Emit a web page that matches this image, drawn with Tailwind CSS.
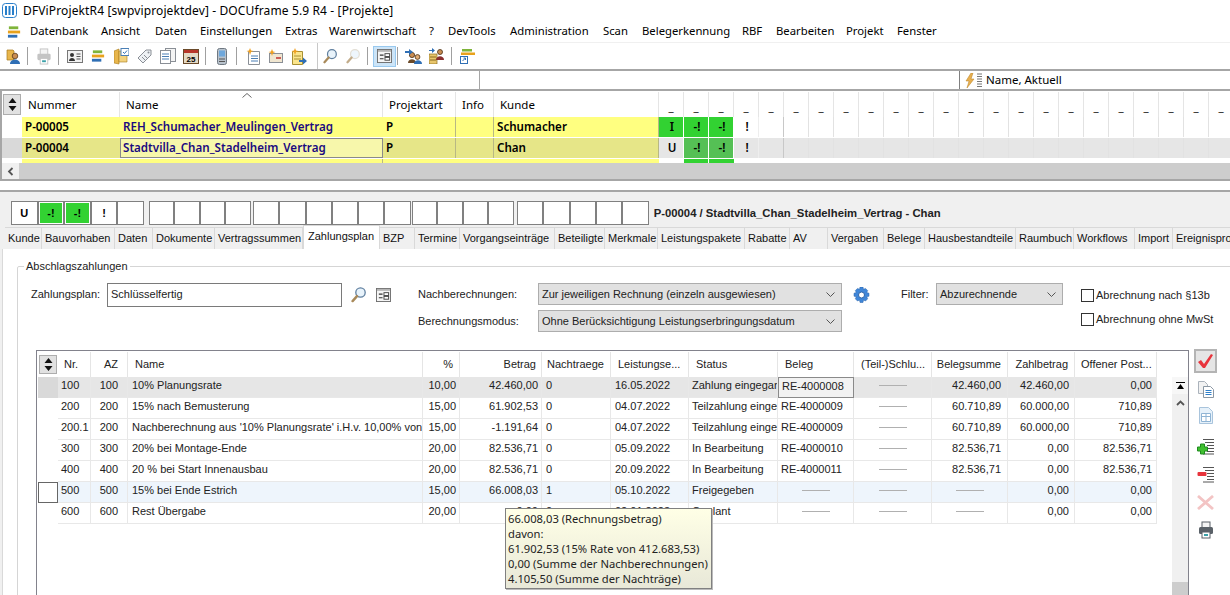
<!DOCTYPE html>
<html lang="de">
<head>
    <meta charset="UTF-8">
    <title>DOCUframe</title>
    <script src="https://cdn.jsdelivr.net/npm/@tailwindcss/browser@4"></script>
</head>
<body class="w-[1230px] h-[595px] overflow-hidden bg-white text-black font-['Liberation_Sans',sans-serif]">

    <!-- shared icons -->
    <svg class="hidden">
        <symbol id="i-printer" viewBox="0 0 16 18">
            <rect x="4" y="1" width="8" height="6" fill="#f4f4f4" stroke="currentColor"/>
            <rect x="1" y="6" width="14" height="7" rx="1.5" fill="currentColor"/>
            <rect x="4" y="11" width="8" height="6" fill="#fff" stroke="currentColor"/>
            <rect x="6" y="13" width="4" height="2" fill="#3aa0a8"/>
        </symbol>
        <symbol id="i-lens" viewBox="0 0 16 16">
            <circle cx="9.500" cy="6" r="4.700" fill="#e8f3fb" stroke="currentColor" stroke-width="1.300"/>
            <path d="M6 9.600 1.600 14.600" stroke="#a98a5a" stroke-width="2.400" stroke-linecap="round"/>
        </symbol>
        <symbol id="i-props" viewBox="0 0 16 15">
            <rect x="0.500" y="0.500" width="15" height="14" fill="#f5f5f5" stroke="#6d6d6d"/>
            <rect x="1" y="1" width="14" height="2" fill="#b5b5b5"/>
            <path d="M3 6.500h4M3 10.500h4" stroke="#333" stroke-width="1.200"/>
            <rect x="8.500" y="5" width="5" height="3" fill="#fff" stroke="#444"/>
            <rect x="8.500" y="9" width="5" height="3" fill="#fff" stroke="#444"/>
        </symbol>
        <symbol id="i-bars" viewBox="0 0 16 14">
            <rect x="2" y="1" width="10" height="3" fill="#7fb43a"/>
            <rect x="1" y="5.500" width="13" height="3" fill="#e8a21c"/>
            <rect x="1" y="10" width="10" height="3" fill="#2f6fb5"/>
        </symbol>
        <symbol id="i-people" viewBox="0 0 16 16">
            <circle cx="6" cy="7" r="2.600" fill="#c98d52" stroke="#4a2e12" stroke-width=".8"/>
            <path d="M2 15c0-5 8-5 8 0z" fill="#6b4a28"/>
            <circle cx="11.500" cy="9" r="2.400" fill="#e0ac74" stroke="#4a2e12" stroke-width=".8"/>
            <path d="M8 16c0-5 8-5 8 0z" fill="#2f6fb5"/>
        </symbol>
    </svg>

    <!-- title bar -->
    <div class="h-[21px] flex items-center pl-[2px] font-['Noto_Sans',sans-serif] text-[12px] tracking-[0.13px]">
        <svg class="w-[15px] h-[15px] mr-[6px]" viewBox="0 0 15 15"><rect x=".5" y=".5" width="14" height="14" rx="3" fill="#fff" stroke="#2a7fc9"/><path d="M4 3v9M7.500 3v9M11 3v9" stroke="#2a7fc9" stroke-width="2"/></svg>
        <span>DFViProjektR4 [swpviprojektdev] - DOCUframe 5.9 R4 - [Projekte]</span>
    </div>

    <!-- menu bar -->
    <div class="h-[21px] flex items-center font-['Noto_Sans',sans-serif] text-[11.300px] whitespace-nowrap">
        <svg class="w-[15px] h-[14px] ml-[7px] mr-[8px]"><use href="#i-bars"/></svg>
        <span class="w-[71px]">Datenbank</span>
        <span class="w-[54px]">Ansicht</span>
        <span class="w-[45px]">Daten</span>
        <span class="w-[85px]">Einstellungen</span>
        <span class="w-[44px]">Extras</span>
        <span class="w-[100px]">Warenwirtschaft</span>
        <span class="w-[19px]">?</span>
        <span class="w-[62px]">DevTools</span>
        <span class="w-[93px]">Administration</span>
        <span class="w-[39px]">Scan</span>
        <span class="w-[100px]">Belegerkennung</span>
        <span class="w-[34px]">RBF</span>
        <span class="w-[70px]">Bearbeiten</span>
        <span class="w-[51px]">Projekt</span>
        <span>Fenster</span>
    </div>

    <!-- toolbar -->
    <div class="h-[27px] border-t border-[#f0f0f0] flex items-center">
        <svg class="w-[15px] h-[16px] ml-[6px]" viewBox="0 0 15 16"><path d="M1 2h6l1 1v9H1z" fill="#e8b64c" stroke="#a67a1c" stroke-width=".7"/><circle cx="9" cy="8" r="2.800" fill="#c98d52" stroke="#4a2e12" stroke-width=".7"/><path d="M4 16c0-6 10-6 10 0z" fill="#2f6fb5"/></svg>
        <div class="w-px h-[18px] bg-[#a0a0a0] ml-[6px]"></div>
        <svg class="w-[16px] h-[17px] ml-[8px] text-[#c4c4c4]"><use href="#i-printer"/></svg>
        <div class="w-px h-[18px] bg-[#a0a0a0] ml-[6px]"></div>
        <svg class="w-[16px] h-[13px] ml-[8px]" viewBox="0 0 16 13"><rect x=".5" y=".5" width="15" height="12" fill="#f2f2f2" stroke="#777"/><circle cx="5" cy="5" r="2" fill="#333"/><path d="M2 11c0-4 6-4 6 0z" fill="#333"/><path d="M9.500 4h4M9.500 6.500h4M9.500 9h4" stroke="#555"/></svg>
        <svg class="w-[15px] h-[14px] ml-[8px]"><use href="#i-bars"/></svg>
        <svg class="w-[15px] h-[17px] ml-[8px]" viewBox="0 0 15 17"><path d="M0 3 5 1v15l-5-1z" fill="#e8b64c" stroke="#a67a1c" stroke-width=".6"/><path d="M5 3h8v11H5z" fill="#f3d27c" stroke="#a67a1c" stroke-width=".6"/><rect x="7" y="0.500" width="8" height="7" fill="#fff" stroke="#4a7fb5"/><path d="m9 4 1.500 1.500L13 2.500" fill="none" stroke="#2f6fb5"/></svg>
        <svg class="w-[15px] h-[15px] ml-[8px]" viewBox="0 0 15 15"><path d="M9 1h5v5l-8 8-5-5z" fill="#eef1f4" stroke="#8a8f96"/><circle cx="11.500" cy="3.500" r="1" fill="#8a8f96"/><path d="m5 8 3 3M7 6l3 3" stroke="#8a8f96"/></svg>
        <svg class="w-[16px] h-[16px] ml-[8px]" viewBox="0 0 16 16"><rect x="5.500" y=".5" width="10" height="13" fill="#f4f4f4" stroke="#8a8f96"/><rect x=".5" y="2.500" width="10" height="13" fill="#fff" stroke="#8a8f96"/><path d="M2 6h7M2 8.500h7M2 11h7" stroke="#4a7fb5"/></svg>
        <svg class="w-[16px] h-[16px] ml-[7px]" viewBox="0 0 16 16"><rect x=".5" y="1.500" width="15" height="14" fill="#e4d9c4" stroke="#6a4a2a"/><rect x="1" y="2" width="14" height="3" fill="#b8362a"/><text x="8" y="13.500" text-anchor="middle" font-size="8" font-weight="700" font-family="Liberation Sans">25</text></svg>
        <div class="w-px h-[18px] bg-[#a0a0a0] ml-[6px]"></div>
        <svg class="w-[10px] h-[17px] ml-[11px]" viewBox="0 0 10 17"><rect x=".5" y=".5" width="9" height="16" rx="2" fill="#b8c2cc" stroke="#6f7882"/><rect x="2" y="2.500" width="6" height="6" fill="#6fa8dc"/><path d="M2 11h6M2 13.500h6" stroke="#555"/></svg>
        <div class="w-px h-[18px] bg-[#a0a0a0] ml-[9px]"></div>
        <svg class="w-[14px] h-[17px] ml-[9px]" viewBox="0 0 14 17"><path d="M2.500 3.500h11v13h-11z" fill="#fff" stroke="#8a8f96"/><path d="M5 8h7M5 10.500h7M5 13h7" stroke="#4a7fb5"/><path d="m4 0 1 2.500L7.500 3 5 4 4 7 3 4 .5 3 3 2.500z" fill="#f0a020"/></svg>
        <svg class="w-[15px] h-[14px] ml-[8px]" viewBox="0 0 15 14"><rect x="1.500" y="4.500" width="13" height="9" fill="#f0e6d0" stroke="#8a8f96"/><path d="M8 9h5" stroke="#c03030" stroke-width="1.500"/><path d="m4 0 1 2.500L7.500 3 5 4 4 7 3 4 .5 3 3 2.500z" fill="#f0a020"/></svg>
        <svg class="w-[16px] h-[17px] ml-[8px]" viewBox="0 0 16 17"><path d="M1.500 3.500h10v13h-10z" fill="#fbe58c" stroke="#a89034"/><path d="M3 8h7M3 11h7" stroke="#a89034"/><path d="m4 0 1 2.500L7.500 3 5 4 4 7 3 4 .5 3 3 2.500z" fill="#f0a020"/><path d="M8 12h4V9.500l4 3.500-4 3.500V14H8z" fill="#2f6fb5"/></svg>
        <div class="w-px h-[26px] bg-[#c8c8c8] ml-[10px]"></div>
        <svg class="w-[15px] h-[16px] ml-[5px] text-[#5f7f9f]"><use href="#i-lens"/></svg>
        <svg class="w-[15px] h-[16px] ml-[8px] text-[#d8d2c4] opacity-70"><use href="#i-lens"/></svg>
        <div class="w-px h-[18px] bg-[#a0a0a0] ml-[6px]"></div>
        <div class="w-[23px] h-[21px] ml-[5px] bg-[#cce4f7] border border-[#99c9ef] flex items-center justify-center">
            <svg class="w-[15px] h-[14px]"><use href="#i-props"/></svg>
        </div>
        <div class="w-px h-[18px] bg-[#a0a0a0] ml-[1px]"></div>
        <svg class="w-[17px] h-[16px] ml-[7px]" viewBox="0 0 17 16"><use href="#i-people" x="1" y="0" width="16" height="16"/><path d="M0 3h4V1l4 3-4 3V5H0z" fill="#2f6fb5"/></svg>
        <svg class="w-[16px] h-[16px] ml-[7px]" viewBox="0 0 16 16"><path d="M0 6h8v10H0z" fill="#e8c66c" stroke="#8a6a20" stroke-width=".7"/><path d="M1 9h6M1 12h6" stroke="#8a6a20"/><path d="M0 2h3V0l3 2.500L3 5V3H0z" fill="#2f6fb5"/><circle cx="11" cy="4" r="2.500" fill="#c98d52" stroke="#4a2e12" stroke-width=".8"/><path d="M7 12c0-5 8-5 8 0z" fill="#8a2f2f"/></svg>
        <div class="w-px h-[18px] bg-[#a0a0a0] ml-[6px]"></div>
        <svg class="w-[16px] h-[16px] ml-[8px]" viewBox="0 0 16 16"><rect x="2" y="1" width="10" height="2.500" fill="#7fb43a"/><rect x="1" y="4.500" width="14" height="2.500" fill="#e8a21c"/><rect x=".5" y="8.500" width="7" height="7" fill="#fff" stroke="#2f6fb5"/><path d="m2.500 13 3-3M3.500 10h2v2" stroke="#2f6fb5" fill="none"/></svg>
    </div>

    <!-- filter bar -->
    <div class="h-[22px] border-t-2 border-b-2 border-[#a6a6a6] flex text-[11.500px] font-['Noto_Sans',sans-serif]">
        <div class="w-[480px] border-r border-[#a6a6a6]"></div>
        <div class="w-[480px] border-r border-[#808080]"></div>
        <div class="flex items-center pl-[5px]">
            <svg class="w-[10px] h-[15px] mr-[2px]" viewBox="0 0 10 15"><path d="M6 0 1 8h3L2 15l7-9H6l2-6z" fill="#e8b050" stroke="#b98020" stroke-width=".5"/></svg>
            <svg class="w-[5px] h-[15px] mr-[4px]" viewBox="0 0 5 15"><path d="M0 1h5M0 3.500h5M0 6h5M0 8.500h5M0 11h5M0 13.500h5" stroke="#777"/></svg>
            <span>Name, Aktuell</span>
        </div>
    </div>

    <!-- project grid -->
    <div class="h-[90px] pt-px border-l-2 border-b-2 border-[#a6a6a6] overflow-hidden">
        <div id="topGrid"></div>
        <div class="h-[17px] flex bg-[#cdcdcd]">
            <div class="w-[17px] bg-[#f0f0f0] flex items-center justify-center">
                <svg class="w-[7px] h-[9px]" viewBox="0 0 7 9"><path d="M5.500 1 2 4.500 5.500 8" fill="none" stroke="#555" stroke-width="1.800"/></svg>
            </div>
        </div>
    </div>

    <!-- detail panel -->
    <div class="mt-[9px] h-[405px] border-t-2 border-[#a6a6a6] bg-[#f0f0f0] overflow-hidden">
        <div class="h-[9px]"></div>
        <div class="h-[24px] flex items-center pl-[11px]">
            <div id="statusBoxes" class="flex"></div>
            <span class="ml-[5px] text-[11.300px] font-bold text-[#222] whitespace-nowrap">P-00004 / Stadtvilla_Chan_Stadelheim_Vertrag - Chan</span>
        </div>

        <!-- tabs -->
        <div id="tabs" class="h-[24px] pl-[5px] flex items-end text-[11px] text-[#111] whitespace-nowrap overflow-hidden"></div>

        <div class="ml-[2px] h-[346px] bg-white border-l border-[#d9d9d9] pt-[11px] pl-[14px] overflow-hidden">
            <fieldset class="w-[1400px] h-[340px] border border-[#d5d5d5] rounded-[2px]">
                <legend class="ml-[6px] px-[2px] text-[11px] leading-[12px] text-[#222]">Abschlagszahlungen</legend>

                <!-- form -->
                <div class="flex items-start mt-[11px] ml-[13px] text-[11px] text-[#222]">
                    <label class="w-[76px] h-[24px] leading-[22px]">Zahlungsplan:</label>
                    <div class="w-[235px] h-[24px] border border-[#7a7a7a] bg-white pl-[3px] leading-[20px]">Schlüsselfertig</div>
                    <svg class="w-[16px] h-[17px] ml-[9px] mt-[3px] text-[#5f7f9f]"><use href="#i-lens"/></svg>
                    <svg class="w-[15px] h-[14px] ml-[9px] mt-[5px]"><use href="#i-props"/></svg>

                    <div class="ml-[27px] w-[120px]">
                        <div class="h-[27px] leading-[22px]">Nachberechnungen:</div>
                        <div class="h-[22px] leading-[22px]">Berechnungsmodus:</div>
                    </div>
                    <div>
                        <div class="w-[304px] h-[22px] mb-[5px] bg-[#e1e1e1] border border-[#adadad] flex items-center justify-between pl-[3px] pr-[6px]">
                            <span>Zur jeweiligen Rechnung (einzeln ausgewiesen)</span>
                            <svg class="w-[9px] h-[5px]" viewBox="0 0 9 5"><path d="m.5.5 4 4 4-4" fill="none" stroke="#555"/></svg>
                        </div>
                        <div class="w-[304px] h-[22px] bg-[#e1e1e1] border border-[#adadad] flex items-center justify-between pl-[3px] pr-[6px]">
                            <span>Ohne Berücksichtigung Leistungserbringungsdatum</span>
                            <svg class="w-[9px] h-[5px]" viewBox="0 0 9 5"><path d="m.5.5 4 4 4-4" fill="none" stroke="#555"/></svg>
                        </div>
                    </div>
                    <svg class="w-[17px] h-[17px] ml-[11px] mt-[4px]" viewBox="0 0 17 17"><path d="M7 0h3l.5 2.300 2-.9 2.200 2.200-1 2 2.300.6v3l-2.300.6 1 2-2.200 2.200-2-1-.5 2.500H7l-.5-2.500-2 1-2.200-2.200 1-2L1 9.200v-3l2.300-.6-1-2 2.200-2.200 2 .9z" fill="#3f86d8" stroke="#2a62a8" stroke-width=".5"/><circle cx="8.500" cy="8" r="3" fill="#fff" stroke="#2a62a8"/></svg>
                    <span class="ml-[31px] w-[35px] h-[22px] leading-[22px]">Filter:</span>
                    <div class="w-[127px] h-[22px] bg-[#e1e1e1] border border-[#adadad] flex items-center justify-between pl-[3px] pr-[6px]">
                        <span>Abzurechnende</span>
                        <svg class="w-[9px] h-[5px]" viewBox="0 0 9 5"><path d="m.5.5 4 4 4-4" fill="none" stroke="#555"/></svg>
                    </div>
                    <div class="ml-[18px] pt-[6px]">
                        <div class="flex items-center h-[13px] mb-[11px]">
                            <div class="w-[13px] h-[13px] bg-white border border-[#333] mr-[2px]"></div>
                            <span class="whitespace-nowrap">Abrechnung nach §13b</span>
                        </div>
                        <div class="flex items-center h-[13px]">
                            <div class="w-[13px] h-[13px] bg-white border border-[#333] mr-[2px]"></div>
                            <span class="whitespace-nowrap">Abrechnung ohne MwSt</span>
                        </div>
                    </div>
                </div>

                <!-- payment table and its buttons -->
                <div class="flex mt-[18px] ml-[18px]">
                    <div class="w-[1153px] h-[260px] border-t border-l border-r border-[#82828c] flex pt-[1px] pl-px">
                        <div id="payGrid" class="w-[1119px] text-[11px] text-[#222]"></div>
                        <div class="ml-[15px] w-[16px] mt-[25px] h-[234px] bg-[#f0f0f0] flex flex-col">
                            <div class="h-[17px] bg-[#f7f7f7] flex items-center justify-center">
                                <svg class="w-[9px] h-[8px]" viewBox="0 0 9 8"><path d="M0 .5h9" stroke="#000"/><path d="M1 7h7L4.500 2z" fill="#000"/></svg>
                            </div>
                            <div class="h-[17px] flex items-center justify-center">
                                <svg class="w-[9px] h-[6px]" viewBox="0 0 9 6"><path d="m1 5 3.500-3.500L8 5" fill="none" stroke="#555" stroke-width="1.800"/></svg>
                            </div>
                            <div class="mt-auto h-[29px] bg-[#cdcdcd]"></div>
                        </div>
                    </div>
                    <div class="ml-[5px] w-[23px] flex flex-col items-center relative -top-[1px]">
                        <div class="w-[23px] h-[24px] bg-[#e5e5e5] border-2 border-[#b4b4b4] flex items-center justify-center">
                            <svg class="w-[17px] h-[16px]" viewBox="0 0 17 16"><path d="m1 9 3-2 3 4 7-10 2 1-8 13H6z" fill="#e8343c"/></svg>
                        </div>
                        <svg class="w-[16px] h-[17px] mt-[8px]" viewBox="0 0 16 17"><path d="M.5.5h6l3 3v9h-9z" fill="#f2f2f2" stroke="#aab2bb"/><path d="M5.500 5.500h7l3 3v8h-10z" fill="#fff" stroke="#8b97a3"/><path d="M7.500 9.500h6M7.500 11.500h6M7.500 13.500h6" stroke="#2f7fc9"/></svg>
                        <svg class="w-[14px] h-[17px] mt-[9px]" viewBox="0 0 14 17"><path d="M.5.5h9l4 4v12H.5z" fill="#e6f1fa" stroke="#a9c4dc"/><path d="M2.500 6.500h9v8h-9zM7 6.500v8M2.500 9.500h9" fill="#fff" stroke="#8fb4d4"/></svg>
                        <svg class="w-[17px] h-[17px] mt-[14px]" viewBox="0 0 17 17"><path d="M6 1.500h11M8 4.500h9M10 7.500h7M10 10.500h7M10 13.500h7M6 16h11" stroke="#555"/><path d="M3.500 6h4v3h3v4h-3v3h-4v-3H.5V9h3z" fill="#3fbf2f" stroke="#1f8a1f"/></svg>
                        <svg class="w-[17px] h-[17px] mt-[11px]" viewBox="0 0 17 17"><path d="M6 1.500h11M8 4.500h9M10 7.500h7M10 10.500h7M10 13.500h7M6 16h11" stroke="#555"/><rect x="0.500" y="6" width="9" height="4" rx="1" fill="#e8343c"/></svg>
                        <svg class="w-[17px] h-[15px] mt-[12px]" viewBox="0 0 17 15"><path d="m1 1 15 13M16 1 1 14" stroke="#f3c4c4" stroke-width="2.800"/></svg>
                        <svg class="w-[16px] h-[18px] mt-[11px] text-[#5a6168]"><use href="#i-printer"/></svg>
                    </div>
                </div>
            </fieldset>
        </div>
    </div>

    <!-- tooltip over the table -->
    <div class="absolute left-[505px] top-[508px] w-[207px] h-[81px] border border-[#808080] bg-gradient-to-b from-[#ffffe6] to-[#e8e8d8] pl-[2px] font-['Noto_Sans',sans-serif] text-[11.200px] leading-[15px] pt-[2px] text-[#222] whitespace-nowrap shadow-[1px_1px_0_#bbb]">
        <div>66.008,03 (Rechnungsbetrag)</div>
        <div>davon:</div>
        <div>61.902,53 (15% Rate von 412.683,53)</div>
        <div>0,00 (Summe der Nachberechnungen)</div>
        <div>4.105,50 (Summe der Nachträge)</div>
    </div>

    <script>
        // Top grid: project list with the status columns
        const topCols = 'grid grid-cols-[20px_98px_263px_73px_38px_165px_repeat(23,25px)]';
        const statusCount = 23;
        const headCell = 'h-[25px] border-r border-[#e5e5e5] flex items-center pl-[6px]';
        let topHtml = `<div class="${topCols} h-[25px] text-[11.500px] font-['Noto_Sans',sans-serif] whitespace-nowrap">
            <div class="h-[25px] flex items-center pl-[1px]"><div class="w-[18px] h-[21px] bg-[#e1e1e1] border border-[#adadad] flex items-center justify-center">
                <svg class="w-[9px] h-[13px]" viewBox="0 0 9 13"><path d="M4.500 0 8.500 5h-8zM4.500 13 .5 8h8z" fill="#111"/></svg></div></div>
            <div class="${headCell}">Nummer</div>
            <div class="${headCell} relative">Name<svg class="absolute left-[122px] top-[1px] w-[10px] h-[5px]" viewBox="0 0 10 5"><path d="m.5 4.500 4.500-4 4.500 4" fill="none" stroke="#666"/></svg></div>
            <div class="${headCell}">Projektart</div>
            <div class="${headCell}">Info</div>
            <div class="${headCell} pl-[3px] border-[#cfcfcf]">Kunde</div>`;
        for (let i = 0; i < statusCount; i++) {
            topHtml += `<div class="h-[25px] border-r border-[#e5e5e5] text-center leading-[29px]">_</div>`;
        }
        topHtml += '</div>';

        const projects = [
            { nr: 'P-00005', name: 'REH_Schumacher_Meulingen_Vertrag', kunde: 'Schumacher', first: 'I', rowBg: 'bg-[#ffff80]', sel: 'bg-white', rest: 'bg-white', green: 'bg-[#32d232]', firstBg: 'bg-[#32d232]', current: false },
            { nr: 'P-00004', name: 'Stadtvilla_Chan_Stadelheim_Vertrag', kunde: 'Chan', first: 'U', rowBg: 'bg-[#e6e688]', sel: 'bg-[#d9d9d9]', rest: 'bg-[#e6e6e6]', green: 'bg-[#55c055]', firstBg: 'bg-[#e6e6e6]', current: true }
        ];
        projects.forEach(p => {
            const base = `h-[20px] ${p.rowBg} border-r border-[#b8b884] flex items-center`;
            topHtml += `<div class="${topCols} h-[21px] pb-px text-[11.600px] font-['Noto_Sans',sans-serif] font-semibold whitespace-nowrap">
                <div class="h-[20px] ${p.sel}"></div>
                <div class="h-[20px] ${p.rowBg} flex items-center pl-[3px]">${p.nr}</div>
                <div class="${p.current ? 'h-[20px] bg-[#f7f7ab] border border-[#8a8a8a] flex items-center pl-[2px] text-[#1a0a80]' : 'h-[20px] ' + p.rowBg + ' flex items-center pl-[3px] text-[#1a0a80]'}">${p.name}</div>
                <div class="${base} pl-[3px]">P</div>
                <div class="${base}"></div>
                <div class="${base} pl-[3px] border-[#8a8a50]">${p.kunde}</div>
                <div class="h-[20px] ${p.firstBg} pl-[2px] text-center border-r border-white leading-[20px]">${p.first}</div>
                <div class="h-[20px] ${p.green} pl-[2px] text-center border-r border-white leading-[20px]">-!</div>
                <div class="h-[20px] ${p.green} pl-[2px] text-center border-r border-white leading-[20px]">-!</div>
                <div class="h-[20px] ${p.rest} pl-[2px] text-center border-r border-[#eeeeee] leading-[20px]">!</div>`;
            for (let i = 4; i < statusCount; i++) {
                topHtml += `<div class="h-[20px] ${p.rest} border-r ${i === 4 ? 'border-[#c8c8c8]' : 'border-[#e2e2e2]'}"></div>`;
            }
            topHtml += '</div>';
        });

        // Third row is cut off by the scrollbar
        topHtml += `<div class="${topCols} h-[4px]">
            <div></div><div class="bg-[#ffff80]"></div><div class="bg-[#ffff80] border-r border-[#b8b884]"></div><div class="bg-[#ffff80]"></div><div class="bg-[#ffff80]"></div><div class="bg-[#ffff80]"></div>
            <div></div><div class="bg-[#32d232] border-r border-white"></div><div class="bg-[#32d232]"></div></div>`;
        document.getElementById('topGrid').innerHTML = topHtml;

        // Status boxes above the tabs
        const boxGroups = [
            [['U', 'bg-white'], ['-!', 'bg-[#32d232] shadow-[inset_0_0_0_1px_white]'], ['-!', 'bg-[#32d232] shadow-[inset_0_0_0_1px_white]'], ['!', 'bg-white'], ['', 'bg-white']],
            [['', 'bg-white'], ['', 'bg-white'], ['', 'bg-white'], ['', 'bg-white']],
            [['', 'bg-white'], ['', 'bg-white'], ['', 'bg-white'], ['', 'bg-white'], ['', 'bg-white'], ['', 'bg-white']],
            [['', 'bg-white'], ['', 'bg-white'], ['', 'bg-white'], ['', 'bg-white']],
            [['', 'bg-white'], ['', 'bg-white'], ['', 'bg-white'], ['', 'bg-white'], ['', 'bg-white']]
        ];
        const boxWidths = ['w-[26.600px]', 'w-[25.500px]', 'w-[26.300px]', 'w-[25.500px]', 'w-[26.400px]'];
        const groupGaps = ['mr-[5px]', 'mr-[2px]', 'mr-[1px]', 'mr-[3px]', 'mr-0'];
        document.getElementById('statusBoxes').innerHTML = boxGroups.map((group, g) =>
            `<div class="flex ${groupGaps[g]}">` + group.map(([text, bg]) =>
                `<div class="${boxWidths[g]} h-[24px] ${bg} border border-[#808080] text-center text-[11px] font-bold leading-[22px]">${text}</div>`
            ).join('') + '</div>'
        ).join('');

        // Tabs with their measured widths
        const tabs = [
            ['Kunde', 'w-[37px]'], ['Bauvorhaben', 'w-[73px]'], ['Daten', 'w-[38px]'], ['Dokumente', 'w-[62px]'], ['Vertragssummen', 'w-[88px]'],
            ['Zahlungsplan', 'w-[77px]', true], ['BZP', 'w-[35px]'], ['Termine', 'w-[45px]'], ['Vorgangseinträge', 'w-[95px]'], ['Beteiligte', 'w-[50px]'],
            ['Merkmale', 'w-[53px]'], ['Leistungspakete', 'w-[87px]'], ['Rabatte', 'w-[45px]'], ['AV', 'w-[38px]'], ['Vergaben', 'w-[56px]'],
            ['Belege', 'w-[41px]'], ['Hausbestandteile', 'w-[91px]'], ['Raumbuch', 'w-[58px]'], ['Workflows', 'w-[61px]'], ['Import', 'w-[38px]'], ['Ereignisprotokoll', 'w-[100px]']
        ];
        document.getElementById('tabs').innerHTML = tabs.map(([label, width, active]) => active
            ? `<div class="${width} h-[24px] shrink-0 bg-white border border-b-0 border-[#d9d9d9] pl-[4px] leading-[20px]">${label}</div>`
            : `<div class="${width} h-[22px] shrink-0 border-r border-[#d9d9d9] border-t pl-[3px] leading-[20px] overflow-hidden">${label}</div>`
        ).join('');

        // Payment table
        const payCols = 'grid grid-cols-[20px_33px_37px_295px_37px_82px_69px_78px_89px_76px_78px_76px_67px_82px]';
        const dash = '<div class="h-px w-[28px] bg-[#b0b0b0]"></div>';
        const head = [['Nr.', 'pl-[6px]'], ['AZ', 'justify-end pr-[9px]'], ['Name', 'pl-[7px]'], ['%', 'justify-end pr-[6px]'], ['Betrag', 'justify-end pr-[5px]'], ['Nachtraege', 'pl-[5px]'], ['Leistungse...', 'pl-[7px]'], ['Status', 'pl-[7px]'], ['Beleg', 'pl-[7px]'], ['(Teil-)Schlu...', 'pl-[7px]'], ['Belegsumme', 'justify-end pr-[6px]'], ['Zahlbetrag', 'justify-end pr-[6px]'], ['Offener Post...', 'pl-[6px]']];
        const rows = [
            ['100', '100', '10% Planungsrate', '10,00', '42.460,00', '0', '16.05.2022', 'Zahlung eingegangen', 'RE-4000008', '', '42.460,00', '42.460,00', '0,00'],
            ['200', '200', '15% nach Bemusterung', '15,00', '61.902,53', '0', '04.07.2022', 'Teilzahlung eingegangen', 'RE-4000009', '', '60.710,89', '60.000,00', '710,89'],
            ['200.1', '200', "Nachberechnung aus '10% Planungsrate' i.H.v. 10,00% von", '15,00', '-1.191,64', '0', '04.07.2022', 'Teilzahlung eingegangen', 'RE-4000009', '', '60.710,89', '60.000,00', '710,89'],
            ['300', '300', '20% bei Montage-Ende', '20,00', '82.536,71', '0', '05.09.2022', 'In Bearbeitung', 'RE-4000010', '', '82.536,71', '0,00', '82.536,71'],
            ['400', '400', '20 % bei Start Innenausbau', '20,00', '82.536,71', '0', '20.09.2022', 'In Bearbeitung', 'RE-4000011', '', '82.536,71', '0,00', '82.536,71'],
            ['500', '500', '15% bei Ende Estrich', '15,00', '66.008,03', '1', '05.10.2022', 'Freigegeben', '', '', '', '0,00', '0,00'],
            ['600', '600', 'Rest Übergabe', '20,00', '0,00', '0', '02.01.2023', 'Geplant', '', '', '', '0,00', '0,00']
        ];
        // alignment of the data cells per column
        const colAlign = ['pl-[3px]', 'justify-end pr-[9px]', 'pl-[4px]', 'justify-end pr-[3px]', 'justify-end pr-[3px]', 'pl-[4px]', 'pl-[4px]', 'pl-[3px]', 'pl-[3px]', 'pl-[3px]', 'justify-end pr-[6px]', 'justify-end pr-[5px]', 'justify-end pr-[4px]'];
        let payHtml = `<div class="${payCols} h-[25px]">
            <div class="flex items-center pl-px"><div class="w-[18px] h-[19px] bg-[#e1e1e1] border border-[#adadad] flex items-center justify-center">
                <svg class="w-[9px] h-[13px]" viewBox="0 0 9 13"><path d="M4.500 0 8.500 5h-8zM4.500 13 .5 8h8z" fill="#111"/></svg></div></div>`;
        head.forEach(([label, align]) => {
            payHtml += `<div class="h-[25px] border-r border-[#e5e5e5] flex items-center whitespace-nowrap ${align}">${label}</div>`;
        });
        payHtml += '</div>';
        rows.forEach((row, r) => {
            const bg = r === 0 ? 'bg-[#e6e6e6]' : r === 5 ? 'bg-[#eef5fc]' : 'bg-white';
            const sel = r === 0 ? 'bg-[#d9d9d9]' : r === 5 ? 'bg-white border border-[#666]' : 'bg-white';
            payHtml += `<div class="${payCols} h-[21px]"><div class="h-[21px] ${sel}"></div>`;
            row.forEach((val, c) => {
                const isDash = val === '' && c >= 8;
                let cls = `h-[21px] pb-[3px] ${bg} border-r border-b border-[#e8e8e8] flex items-center overflow-hidden whitespace-nowrap `;
                cls += isDash ? 'justify-center' : colAlign[c];
                if (r === 0 && c === 8) cls = 'h-[21px] pb-[3px] bg-[#f2f2f2] border border-[#8a8a8a] flex items-center pl-[3px] whitespace-nowrap';
                payHtml += `<div class="${cls}">${isDash ? dash : val}</div>`;
            });
            payHtml += '</div>';
        });
        document.getElementById('payGrid').innerHTML = payHtml;
    </script>
</body>
</html>
